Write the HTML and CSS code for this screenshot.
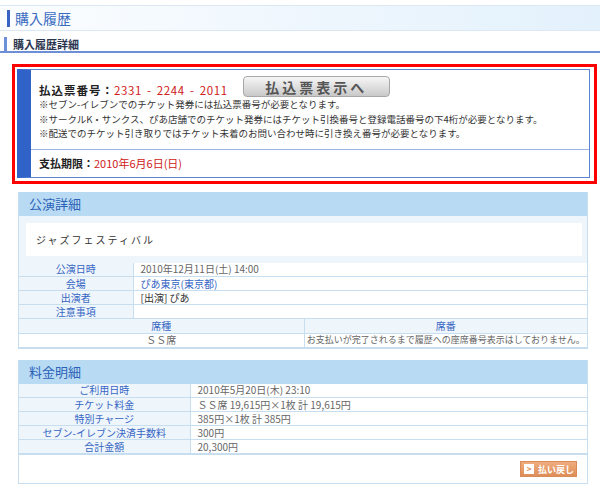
FILE: index.html
```html
<!DOCTYPE html>
<html lang="ja">
<head>
  <meta charset="UTF-8" />
  <title>購入履歴</title>
  <link rel="stylesheet" href="styles.css">
</head>
<body>

  <!-- Page title -->
  <div class="page-title"><span class="bar"></span>購入履歴</div>
  <div class="sub-title"><span class="bar"></span>購入履歴詳細</div>

  <!-- Payment notice -->
  <div class="notice">
    <div class="notice-inner">
      <div class="notice-body">
        <div class="notice-head">
          <p class="pay-no"><b>払込票番号：</b><span class="red num">2331 - 2244 - 2011</span></p>
          <button class="show-btn">払込票表示へ</button>
        </div>
        <p class="note">※セブン-イレブンでのチケット発券には払込票番号が必要となります。</p>
        <p class="note">※サークルK・サンクス、ぴあ店舗でのチケット発券にはチケット引換番号と登録電話番号の下4桁が必要となります。</p>
        <p class="note">※配送でのチケット引き取りではチケット未着のお問い合わせ時に引き換え番号が必要となります。</p>
      </div>
      <div class="notice-foot"><b>支払期限：</b><span class="red">2010年6月6日(日)</span></div>
    </div>
  </div>

  <!-- Performance -->
  <div class="section">
    <h2 class="section-head">公演詳細</h2>
    <div class="event-wrap">
      <div class="event-name">ジャズフェスティバル</div>
    </div>
    <table class="info perf">
      <tr><th>公演日時</th><td>2010年12月11日(土) 14:00</td></tr>
      <tr><th>会場</th><td><a href="#">ぴあ東京(東京都)</a></td></tr>
      <tr><th>出演者</th><td class="dark">[出演] ぴあ</td></tr>
      <tr><th>注意事項</th><td></td></tr>
    </table>
    <table class="info seats">
      <tr><th>席種</th><th>席番</th></tr>
      <tr><td>ＳＳ席</td><td>お支払いが完了されるまで履歴への座席番号表示はしておりません。</td></tr>
    </table>
  </div>

  <!-- Price -->
  <div class="section">
    <h2 class="section-head">料金明細</h2>
    <table class="info price">
      <tr><th>ご利用日時</th><td>2010年5月20日(木) 23:10</td></tr>
      <tr><th>チケット料金</th><td>ＳＳ席 19,615円×1枚 計 19,615円</td></tr>
      <tr><th>特別チャージ</th><td>385円×1枚 計 385円</td></tr>
      <tr><th>セブン-イレブン決済手数料</th><td>300円</td></tr>
      <tr><th>合計金額</th><td>20,300円</td></tr>
    </table>
    <div class="section-foot">
      <button class="refund-btn"><span class="arrow">&gt;</span>払い戻し</button>
    </div>
  </div>

</body>
</html>
```

FILE: styles.css
```css
* { margin: 0; padding: 0; box-sizing: border-box; }

body {
  width: 600px;
  background: #fff;
  font-family: "Noto Sans CJK JP", "DejaVu Sans", sans-serif;
  font-size: 10px;
  color: #555;
}

.bar { display: inline-block; }

.page-title {
  margin-top: 5px;
  height: 26px;
  display: flex;
  align-items: center;
  padding-left: 7px;
  border-top: 1px solid #dbe7f3;
  border-bottom: 1px solid #dbe7f3;
  background: linear-gradient(to right, #fbfdff, #e3f1fc);
  color: #3a6cc0;
  font-size: 14px;
  line-height: 1;
}

.page-title .bar {
  width: 3px;
  height: 17px;
  margin-right: 5px;
  background: #3a64c4;
}

.sub-title {
  margin-top: 6px;
  height: 16px;
  display: flex;
  align-items: center;
  padding-left: 4px;
  border-bottom: 2px solid #6d8fd8;
  color: #2c3550;
  font-size: 11px;
  font-weight: bold;
  line-height: 1;
}

.sub-title .bar {
  width: 3px;
  height: 14px;
  margin-right: 6px;
  background: #6d8fd8;
}

.notice {
  margin: 11px 3px 0 12px;
  border: 3px solid #f00;
  padding: 2px 4px 3px 2px;
}

.notice-inner {
  border: 1px solid #5b84d4;
  border-left: 14px solid #3162c8;
}

.notice-body {
  padding: 6px 8px 8px;
  border-bottom: 1px solid #9cb5e3;
}

.notice-head {
  display: flex;
  align-items: flex-end;
  gap: 15px;
}

.pay-no {
  font-size: 11.5px;
  color: #222;
  line-height: 14px;
  letter-spacing: 1px;
}

.red { color: #d02020; font-weight: normal; }

.num {
  font-size: 11.5px;
  letter-spacing: 0.6px;
  word-spacing: 2px;
}

.show-btn {
  width: 147px;
  height: 21px;
  border: 1px solid #a8a8a8;
  border-radius: 4px;
  background: linear-gradient(#f6f6f6, #c9c9c9);
  color: #555;
  font-family: inherit;
  font-size: 14px;
  font-weight: bold;
  letter-spacing: 3px;
  line-height: 1;
}

.note {
  font-size: 9.5px;
  line-height: 14.5px;
  color: #333;
  white-space: nowrap;
}

.notice-foot {
  height: 27px;
  display: flex;
  align-items: center;
  padding-left: 8px;
  font-size: 11px;
  color: #222;
}

.section {
  margin: 8px 12px 11px 18px;
  border: 1px solid #c6def0;
  border-top: none;
}

.section-head {
  height: 24px;
  display: flex;
  align-items: center;
  padding-left: 10px;
  background: #b8dbf3;
  color: #2b62b8;
  font-size: 13px;
  font-weight: normal;
}

.event-wrap {
  background: #eef5fb;
  padding: 7px 5px 7px 7px;
}

.event-name {
  height: 33px;
  display: flex;
  align-items: center;
  padding-left: 10px;
  background: #fff;
  color: #333;
  font-size: 10px;
  letter-spacing: 2px;
}

.info {
  width: 100%;
  border-collapse: collapse;
}

.info th,
.info td {
  height: 14px;
  border: 1px solid #c6def0;
  font-size: 10px;
  line-height: 12px;
  padding: 0 7px;
  white-space: nowrap;
}

.info tr:first-child th,
.info tr:first-child td { border-top: none; }
.info th:first-child,
.info td:first-child { border-left: none; }
.info th:last-child,
.info td:last-child { border-right: none; }

.info th {
  background: #eef5fb;
  color: #3666c4;
  font-weight: normal;
  text-align: center;
}

.info td { color: #666; }
.info td.dark { color: #333; }
.info a { color: #3666c4; text-decoration: none; }

.perf th { width: 114px; }
.price th { width: 171px; }

.seats td { text-align: center; }
.seats td:last-child { font-size: 9px; padding: 0; }
.seats th:first-child { width: 285px; }

.section-foot {
  height: 29px;
  display: flex;
  justify-content: flex-end;
  align-items: center;
  padding-right: 10px;
  border-top: 1px solid #c6def0;
}

.refund-btn {
  width: 57px;
  height: 16px;
  display: flex;
  align-items: center;
  gap: 4px;
  padding-left: 3px;
  border: 1px solid #d98a55;
  background: linear-gradient(#efad7e, #de8d58);
  color: #fff;
  font-family: inherit;
  font-size: 9px;
  font-weight: bold;
}

.refund-btn .arrow {
  width: 10px;
  height: 10px;
  display: flex;
  align-items: center;
  justify-content: center;
  background: #fff;
  color: #e08a50;
  font-size: 8px;
  line-height: 1;
}
```
